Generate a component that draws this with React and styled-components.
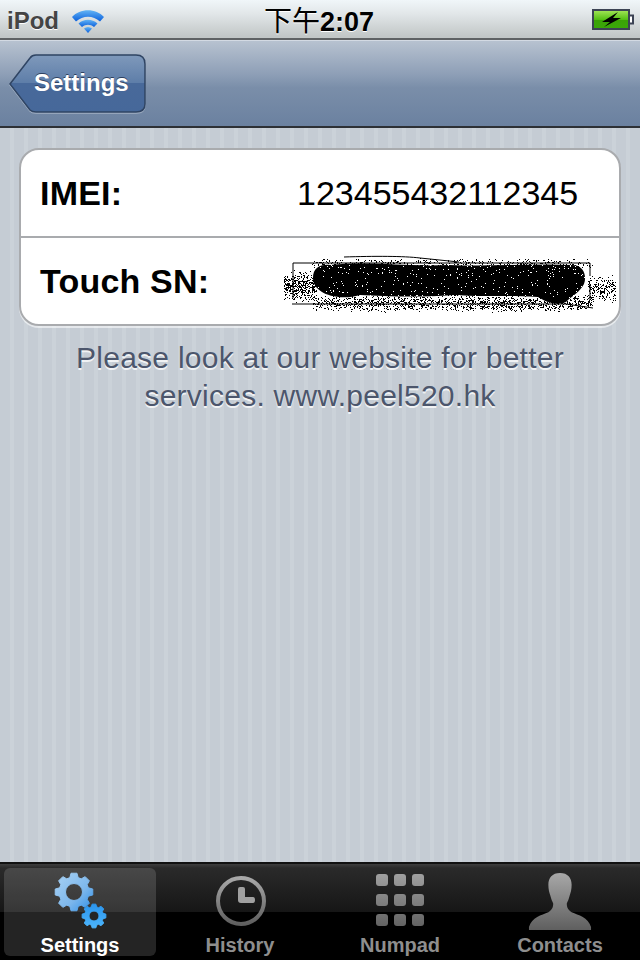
import React from "react";
import styled, { createGlobalStyle } from "styled-components";

const GlobalStyle = createGlobalStyle`
  html, body {
    margin: 0;
    padding: 0;
    background: #000;
  }
  body {
    font-family: "Liberation Sans", Arial, sans-serif;
  }
`;

const Screen = styled.div`
  width: 640px;
  height: 960px;
  display: flex;
  flex-direction: column;
  overflow: hidden;
`;

const StatusBar = styled.div`
  height: 40px;
  box-sizing: border-box;
  padding: 0 6px 0 7px;
  display: grid;
  grid-template-columns: 1fr auto 1fr;
  align-items: center;
  background: linear-gradient(#f0f6f9 0%, #e2e7e9 35%, #c2c7c7 96%);
  border-bottom: 2px solid #5f6264;
`;

const StatusLeft = styled.div`
  display: flex;
  align-items: center;
  gap: 12px;
`;

const Carrier = styled.span`
  font-size: 24px;
  font-weight: 700;
  color: #444;
  text-shadow: 0 1px 0 #fff;
  line-height: 36px;
`;

const Clock = styled.div`
  margin-left: -3px;
  font-size: 27px;
  font-weight: 700;
  color: #000;
  line-height: 38px;
  text-shadow: 0 1px 0 #fff;
  span {
    font-family: "Noto Sans CJK TC", "Noto Sans CJK SC", sans-serif;
    font-size: 28px;
    font-weight: 400;
  }
`;

const StatusRight = styled.div`
  display: flex;
  justify-content: flex-end;
  margin-top: -1px;
`;

const NavBar = styled.div`
  height: 88px;
  box-sizing: border-box;
  padding: 13px 0 0 9px;
  background: linear-gradient(#b7c2d0 0%, #8d9eb6 40%, #7a8ea9 55%, #6b81a0 100%);
  border-top: 1px solid #d3dae3;
  border-bottom: 2px solid #2d3035;
`;

const BackButton = styled.button`
  position: relative;
  width: 138px;
  height: 60px;
  padding: 0 0 2px 25px;
  border: 0;
  background: none;
  font-family: inherit;
  font-size: 24px;
  font-weight: 700;
  color: #fff;
  text-shadow: 0 -1px 0 #2f4160;
  display: flex;
  align-items: center;
`;

const BackShape = styled.svg`
  position: absolute;
  left: 0;
  top: 0;
  filter: drop-shadow(0 1px 0 rgba(255, 255, 255, 0.35));
`;

const BackLabel = styled.span`
  position: relative;
`;

const Content = styled.div`
  flex: 1;
  box-sizing: border-box;
  padding: 20px 19px 0;
  background: repeating-linear-gradient(90deg, #c5ccd4 0 10px, #cbd2d9 10px 14px);
`;

const Card = styled.div`
  background: #fff;
  border: 2px solid #a9abae;
  border-radius: 20px;
  box-shadow: 0 2px 0 rgba(255, 255, 255, 0.55);
  overflow: hidden;
`;

const Row = styled.div`
  height: 86px;
  display: grid;
  grid-template-columns: 257px 1fr;
  align-items: center;
  padding-left: 19px;
  & + & {
    border-top: 2px solid #a9abae;
  }
`;

const RowLabel = styled.div`
  font-size: 34px;
  font-weight: 700;
  letter-spacing: 0.2px;
  color: #000;
`;

const RowValue = styled.div`
  font-size: 34px;
  color: #000;
`;

const Scribble = styled.svg`
  margin-left: -13px;
  display: block;
`;

const Footnote = styled.p`
  margin: 13px 0 0;
  font-size: 30px;
  line-height: 38px;
  letter-spacing: 0.25px;
  text-align: center;
  color: #4c566c;
  text-shadow: 0 2px 0 rgba(255, 255, 255, 0.75);
`;

const TabBar = styled.div`
  height: 98px;
  box-sizing: border-box;
  padding: 4px;
  display: grid;
  grid-template-columns: repeat(4, 1fr);
  gap: 8px;
  background: linear-gradient(#3d3d3d 0, #2a2a2a 4px, #161616 48px, #000 48px);
  border-top: 2px solid #111;
`;

const Tab = styled.div`
  border-radius: 6px;
  display: flex;
  flex-direction: column;
  align-items: center;
  justify-content: flex-end;
  background: ${(p) => (p.$active ? "rgba(255,255,255,0.14)" : "transparent")};
`;

const TabIcon = styled.svg`
  display: block;
  margin-bottom: ${(p) => p.$gap}px;
  margin-left: ${(p) => p.$shift || 0}px;
`;

const TabLabel = styled.span`
  font-size: 20px;
  font-weight: 700;
  line-height: 22px;
  color: ${(p) => (p.$active ? "#fff" : "#8e8e8e")};
`;

// seeded so the scribble stays the same between runs
const rng = (() => {
  let s = 20;
  return () => {
    s = (s * 16807) % 2147483647;
    return s / 2147483647;
  };
})();

// [x, width, y, height, count]: clusters of loose dots round the blob
const clusters = [
  [0, 32, 22, 32, 420],
  [304, 28, 26, 28, 230],
  [28, 280, 46, 18, 1500],
  [28, 280, 10, 10, 420],
];
const specks = clusters.flatMap(([x, w, y, h, n]) =>
  Array.from({ length: n }, () => [
    Math.round(x + rng() * w),
    Math.round(y + ((rng() + rng()) / 2) * h),
  ])
);
const holes = Array.from({ length: 300 }, () => {
  const top = rng() > 0.5;
  return [Math.round(32 + rng() * 268), Math.round(top ? 17 + rng() * 12 : 30 + rng() * 20)];
});

const ScribbleMark = () => (
  <Scribble width="332" height="66" viewBox="0 0 332 66">
    <path
      d="M9 15H306M9 15V50M8 56H282L309 60M306 15V28M306 36V52M60 9C90 8 120 8 136 10L175 14"
      fill="none"
      stroke="#000"
      strokeWidth="1"
    />
    {specks.map(([x, y], i) => (
      <rect key={i} x={x} y={y} width="1" height="1" fill="#000" />
    ))}
    <path d="M29 30C29 20 36 16 46 17C90 13 120 19 165 17C210 19 250 15 288 17C300 17 303 28 300 36C296 44 288 48 282 54C272 58 262 54 254 49C220 47 200 49 170 47C130 50 100 48 76 47C60 52 44 48 38 44C32 40 29 36 29 30Z" fill="#000" />
    {holes.map(([x, y], i) => (
      <rect key={i} x={x} y={y} width="1" height="1" fill="#fff" />
    ))}
  </Scribble>
);

const WifiIcon = () => (
  <svg width="34" height="26" viewBox="0 0 34 26">
    <defs>
      <linearGradient id="wifi" x1="0" y1="0" x2="0" y2="1">
        <stop offset="0" stopColor="#62b4f5" />
        <stop offset="1" stopColor="#0a5fdc" />
      </linearGradient>
    </defs>
    <g fill="url(#wifi)">
      <path d="M1 9C9 0 25 0 33 9L29 13.500C22 7 12 7 5 13.500Z" />
      <path d="M7.500 15.500C13 10.500 21 10.500 26.500 15.500L23 19C19.500 16 14.500 16 11 19Z" />
      <path d="M13 20.500C15.500 18.500 18.500 18.500 21 20.500L17 25Z" />
    </g>
  </svg>
);

const BatteryIcon = () => (
  <svg width="42" height="24" viewBox="0 0 42 24">
    <defs>
      <linearGradient id="charge" x1="0" y1="0" x2="0" y2="1">
        <stop offset="0" stopColor="#a6e65a" />
        <stop offset="0.5" stopColor="#55bf14" />
        <stop offset="0.55" stopColor="#3ba305" />
        <stop offset="1" stopColor="#3aa80a" />
      </linearGradient>
    </defs>
    <rect x="1" y="2" width="36" height="19" fill="url(#charge)" stroke="#3c4354" strokeWidth="2" />
    <path d="M38 7.500H41V15.500H38" fill="#fff" stroke="#3c4354" strokeWidth="2" />
    <path d="M26 4L10 14H18L12 19L29 10H21L26 4Z" fill="#000" />
  </svg>
);

const GearPath = ({ cx, cy, outer, inner, hole, teeth, fill }) => {
  let d = "";
  const step = (Math.PI * 2) / teeth;
  for (let i = 0; i < teeth; i++) {
    const a = i * step - Math.PI / 2;
    const pts = [
      [a - step * 0.36, inner],
      [a - step * 0.2, outer],
      [a + step * 0.2, outer],
      [a + step * 0.36, inner],
    ];
    pts.forEach(([ang, r], j) => {
      d += `${i === 0 && j === 0 ? "M" : "L"}${(cx + Math.cos(ang) * r).toFixed(2)} ${(cy + Math.sin(ang) * r).toFixed(2)}`;
    });
  }
  d += "Z";
  d += `M${cx + hole} ${cy}A${hole} ${hole} 0 1 0 ${cx - hole} ${cy}A${hole} ${hole} 0 1 0 ${cx + hole} ${cy}Z`;
  return <path d={d} fill={fill} fillRule="evenodd" strokeLinejoin="round" stroke={fill} strokeWidth="1" />;
};

const SettingsIcon = () => (
  <TabIcon $gap={2} width="60" height="60" viewBox="0 0 60 60">
    <defs>
      <linearGradient id="gearBig" x1="0" y1="0" x2="1" y2="1">
        <stop offset="0" stopColor="#a9d2f4" />
        <stop offset="0.6" stopColor="#7db7ec" />
        <stop offset="1" stopColor="#2e8fe8" />
      </linearGradient>
      <linearGradient id="gearSmall" x1="0" y1="0" x2="0" y2="1">
        <stop offset="0" stopColor="#2b95ee" />
        <stop offset="1" stopColor="#4cb5fb" />
      </linearGradient>
    </defs>
    <GearPath cx={24} cy={20} outer={19} inner={15} hole={8.500} teeth={8} fill="url(#gearBig)" />
    <GearPath cx={44} cy={44} outer={12} inner={9.500} hole={5} teeth={8} fill="url(#gearSmall)" />
  </TabIcon>
);

const GreyStops = ({ id }) => (
  <linearGradient id={id} x1="0" y1="0" x2="0" y2="1">
    <stop offset="0" stopColor="#a8a8a8" />
    <stop offset="1" stopColor="#5f5f5f" />
  </linearGradient>
);

const HistoryIcon = () => (
  <TabIcon $gap={7} $shift={2} width="52" height="52" viewBox="0 0 52 52">
    <defs>
      <GreyStops id="clockGrey" />
    </defs>
    <circle cx="26" cy="26" r="23" fill="none" stroke="url(#clockGrey)" strokeWidth="4" />
    <path d="M25 12H28Q30 12 30 14V22H38Q40 22 40 25Q40 28 38 28H26Q23 28 23 25V14Q23 12 25 12Z" fill="#a0a0a0" />
  </TabIcon>
);

const NumpadIcon = () => (
  <TabIcon $gap={8} width="50" height="52" viewBox="0 0 50 52">
    <defs>
      <linearGradient id="padGrey" gradientUnits="userSpaceOnUse" x1="0" y1="0" x2="0" y2="52">
        <stop offset="0" stopColor="#a0a0a0" />
        <stop offset="1" stopColor="#636363" />
      </linearGradient>
    </defs>
    {[0, 20, 40].map((y) =>
      [1, 19, 37].map((x) => (
        <rect key={`${x}-${y}`} x={x} y={y} width="12" height="12" rx="3" fill="url(#padGrey)" />
      ))
    )}
  </TabIcon>
);

const ContactsIcon = () => (
  <TabIcon $gap={4} width="64" height="57" viewBox="0 0 66 58" preserveAspectRatio="none">
    <defs>
      <GreyStops id="personGrey" />
    </defs>
    <path
      d="M33 0C25 0 21 5 21 12C21 17 22 20 23 23C24 27 25 29 26 31C26 35 25 37 21 40C14 43 4 45 1 55V58H65V55C62 45 52 43 45 40C41 37 40 35 40 31C41 29 42 27 43 23C44 20 45 17 45 12C45 5 41 0 33 0Z"
      fill="url(#personGrey)"
    />
  </TabIcon>
);

export default function App() {
  return (
    <Screen>
      <GlobalStyle />
      <StatusBar>
        <StatusLeft>
          <Carrier>iPod</Carrier>
          <WifiIcon />
        </StatusLeft>
        <Clock>
          <span>下午</span>2:07
        </Clock>
        <StatusRight>
          <BatteryIcon />
        </StatusRight>
      </StatusBar>
      <NavBar>
        <BackButton>
          <BackShape width="138" height="60" viewBox="0 0 138 60">
            <defs>
              <linearGradient id="backFill" x1="0" y1="0" x2="0" y2="1">
                <stop offset="0" stopColor="#7f99bb" />
                <stop offset="0.5" stopColor="#5d7da8" />
                <stop offset="0.5" stopColor="#48699a" />
                <stop offset="1" stopColor="#46689a" />
              </linearGradient>
            </defs>
            <path
              d="M1 30L21 4Q23 1 27 1H127Q136 1 136 10V50Q136 58 127 58H27Q23 58 21 56Z"
              fill="url(#backFill)"
              stroke="#2f4463"
              strokeWidth="1.500"
            />
          </BackShape>
          <BackLabel>Settings</BackLabel>
        </BackButton>
      </NavBar>
      <Content>
        <Card>
          <Row>
            <RowLabel>IMEI:</RowLabel>
            <RowValue>123455432112345</RowValue>
          </Row>
          <Row>
            <RowLabel>Touch SN:</RowLabel>
            <ScribbleMark />
          </Row>
        </Card>
        <Footnote>
          Please look at our website for better
          <br />
          services. www.peel520.hk
        </Footnote>
      </Content>
      <TabBar>
        <Tab $active>
          <SettingsIcon />
          <TabLabel $active>Settings</TabLabel>
        </Tab>
        <Tab>
          <HistoryIcon />
          <TabLabel>History</TabLabel>
        </Tab>
        <Tab>
          <NumpadIcon />
          <TabLabel>Numpad</TabLabel>
        </Tab>
        <Tab>
          <ContactsIcon />
          <TabLabel>Contacts</TabLabel>
        </Tab>
      </TabBar>
    </Screen>
  );
}
